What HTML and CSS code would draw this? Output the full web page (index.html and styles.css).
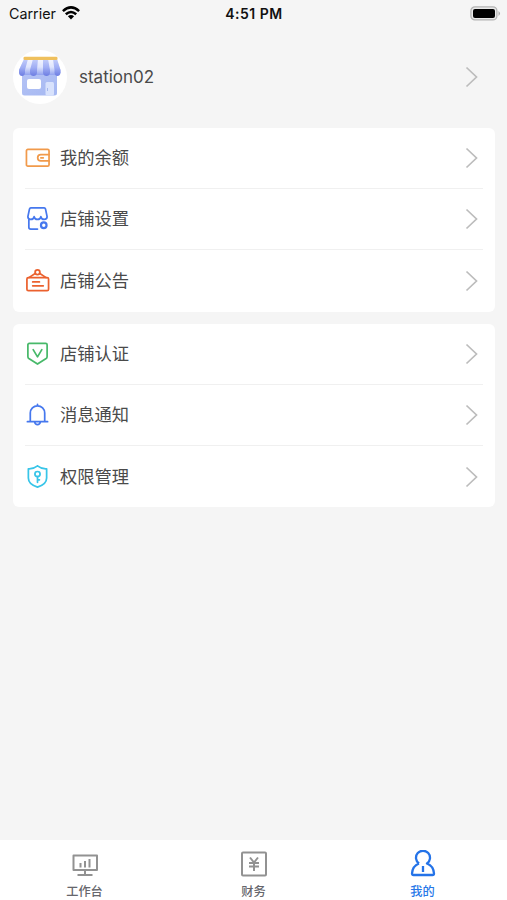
FILE: index.html
```html
<!DOCTYPE html>
<html lang="zh-CN">
<head>
<meta charset="utf-8">
<title>我的</title>
<link rel="stylesheet" href="styles.css">
</head>
<body>
<div class="screen">
  <header class="status">
    <div class="carrier"><span>Carrier</span>
      <svg width="18" height="14" viewBox="0 0 18 14"><g fill="none" stroke="#000" stroke-width="2.5"><path d="M.9 5.1Q9-2.3 17.1 5.1"/><path d="M3.800 8.300Q9 3.700 14.200 8.300"/></g><path d="M5.900 10.300Q9 7.900 12.100 10.300L9 13.600Z"/></svg>
    </div>
    <div class="clock">4:51 PM</div>
    <svg class="battery" width="31" height="15" viewBox="0 0 31 15"><rect x=".9" y=".9" width="26" height="13" rx="4" fill="#e9e9e9" stroke="#b3b3b3" stroke-width="1.3"/><rect x="3" y="3" width="22" height="9" rx="2"/><path d="M28.500 5q3 2.500 0 5z" fill="#aaa"/></svg>
  </header>
  <section class="profile">
    <svg class="avatar" width="54" height="54" viewBox="0 0 54 54">
      <defs>
        <linearGradient id="wall" x2="1" y2="1"><stop stop-color="#b5c3f5"/><stop offset="1" stop-color="#a5b8f2"/></linearGradient>
        <linearGradient id="dark" x2="0" y2="1"><stop stop-color="#c3cdfa"/><stop offset=".5" stop-color="#a0aef4"/><stop offset="1" stop-color="#6c7de2"/></linearGradient>
        <linearGradient id="light" x2="0" y2="1"><stop stop-color="#f3f5ff"/><stop offset=".5" stop-color="#dfe5fd"/><stop offset="1" stop-color="#93a3ef"/></linearGradient>
      </defs>
      <circle cx="27" cy="27" r="27" fill="#fff"/>
      <path d="M9 22h35v21q0 2.500-2.500 2.500h-30Q9 45.500 9 43z" fill="url(#wall)"/>
      <path d="M11 9h33l3.500 11v2.500q-1 2.500-3.500 2.500H10q-3 0-4-2.500V20z" fill="url(#light)"/>
      <g fill="url(#dark)"><path d="M11 9h4l-3 11v3q-.500 3-3 3t-3-3v-3z"/><path d="M20 9h5l-1 11v3q-.500 3-3.500 3T17 23v-3z"/><path d="M30 9h5l2 11v3q-.500 3-3.500 3T30 23z"/><path d="M40 9h4l3.500 11v3q-.500 3-3 3t-3-3v-3z"/></g>
      <rect x="10.500" y="6.700" width="34" height="3.300" rx="1.300" fill="#efc05d"/>
      <rect x="14" y="29" width="14" height="10" rx="2" fill="#fff"/>
      <rect x="32.500" y="32" width="8.500" height="13.500" rx="1.500" fill="#d8e2fc"/><path d="M34.500 38v3" stroke="#a5b7ef"/>
    </svg>
    <span class="name">station02</span>
    <svg class="arrow" width="13" height="22" viewBox="0 0 13 22"><path d="M1.500 1.500 11.500 11l-10 9.500"/></svg>
  </section>
  <main>
    <section class="card">
      <div class="row"><svg class="icon orange" viewBox="0 0 26 26"><rect x="1.500" y="4.500" width="23.500" height="17.500" rx="1.500"/><path d="M25 10h-8.500a3.300 3.300 0 0 0 0 6.600H25M16.500 13.300h2.500"/></svg><span>我的余额</span><svg class="arrow" width="13" height="22" viewBox="0 0 13 22"><path d="M1.500 1.500 11.500 11l-10 9.500"/></svg></div>
      <div class="row"><svg class="icon blue" viewBox="0 0 26 26"><path d="M6 2h14q1 0 1.300 1L23 11q0 3-3 3t-3.500-3q-.500 3-3.500 3t-3.500-3Q9 14 6 14t-3-3L4.700 3Q5 2 6 2M4 14v8q0 2 2 2h7"/><circle cx="19.500" cy="20" r="2.900" stroke-width="2.300"/></svg><span>店铺设置</span><svg class="arrow" width="13" height="22" viewBox="0 0 13 22"><path d="M1.500 1.500 11.500 11l-10 9.500"/></svg></div>
      <div class="row"><svg class="icon red" viewBox="0 0 26 26"><rect x="2" y="10" width="22.500" height="13.500" rx="1.500"/><path d="m4 10 7-4.500M22 10l-7-4.500M8 14.500h7M8 18.500h11"/><circle cx="13" cy="4.500" r="2.500"/></svg><span>店铺公告</span><svg class="arrow" width="13" height="22" viewBox="0 0 13 22"><path d="M1.500 1.500 11.500 11l-10 9.500"/></svg></div>
    </section>
    <section class="card">
      <div class="row"><svg class="icon green" viewBox="0 0 26 26"><path d="M4.500 2.500h17q1.500 0 1.500 1.500v12q0 1.500-1 2.200L13 24l-9-5.800Q3 17.500 3 16V4q0-1.500 1.500-1.500M8.500 9l4.500 7.500L17.500 9"/></svg><span>店铺认证</span><svg class="arrow" width="13" height="22" viewBox="0 0 13 22"><path d="M1.500 1.500 11.500 11l-10 9.500"/></svg></div>
      <div class="row"><svg class="icon blue" viewBox="0 0 26 26"><path d="M5.500 20.500v-9a7.500 7.500 0 0 1 15 0v9M2.500 20.500h21M13 2.500V4M10 21q.500 2.500 3 2.500t3-2.500"/></svg><span>消息通知</span><svg class="arrow" width="13" height="22" viewBox="0 0 13 22"><path d="M1.500 1.500 11.500 11l-10 9.500"/></svg></div>
      <div class="row"><svg class="icon cyan" viewBox="0 0 26 26"><path d="M13 2q4 3.300 9.500 3v9.500q0 6.500-9.500 9.500-9.500-3-9.500-9.500V5Q9 5.300 13 2"/><circle cx="13" cy="10.500" r="2.700"/><path d="M13 13.200V19M13 16.500h2"/></svg><span>权限管理</span><svg class="arrow" width="13" height="22" viewBox="0 0 13 22"><path d="M1.500 1.500 11.500 11l-10 9.500"/></svg></div>
    </section>
  </main>
  <nav class="tabs">
    <div class="tab"><svg width="28" height="28" viewBox="0 0 28 28"><path d="M2.500 5.500h23.500V20H2.500zM14 20v4.500M6.500 25h15M9.500 13v4.500M14 11v6.500M18.500 9v8.500"/></svg><span>工作台</span></div>
    <div class="tab"><svg width="28" height="28" viewBox="0 0 28 28"><rect x="2" y="2.500" width="24" height="23" rx="1"/><path d="m10 7.500 4 5 4-5M9 13h10M9 16.500h10M14 12.500V21"/></svg><span>财务</span></div>
    <div class="tab active"><svg width="28" height="28" viewBox="0 0 28 28"><path d="M10 13.500a7 7 0 1 1 8 0q6.500 2.500 7 10 0 1.500-1.500 1.500h-19Q3 25 3 23.500q.500-7.500 7-10M14 16v6"/></svg><span>我的</span></div>
  </nav>
</div>
</body>
</html>
```
FILE: styles.css
```css
* { box-sizing: border-box; }
body { margin: 0; background: #f5f5f5; color: #4a4a4a; font-family: Inter, "Noto Sans CJK SC", sans-serif; }
.screen { height: 900px; display: flex; flex-direction: column; }
svg { display: block; flex: none; }
.status { height: 28px; display: grid; grid-template-columns: 1fr auto 1fr; align-items: center; padding: 0 6px 2px 9px; color: #111; font-size: 14.3px; }
.carrier { display: flex; align-items: center; gap: 6px; }
.clock { font-size: 14px; font-weight: 600; letter-spacing: 0.5px; margin-right: 2px; }
.battery { justify-self: end; }
.profile { height: 99px; display: flex; align-items: center; padding: 0 29px 1px 13px; }
.name { margin-left: 12px; font-size: 17px; }
.arrow { margin-left: auto; fill: none; stroke: #bcbcbc; stroke-width: 1.7; }
main { flex: 1; display: flex; flex-direction: column; gap: 12px; padding: 1px 12px 0 13px; }
.card { background: #fff; border-radius: 6px; padding: 0 12px; height: 184px; }
.card + .card { height: 183px; }
.row { height: 61px; display: flex; align-items: center; padding: 0 5px 1px 0; font-size: 17.3px; border-bottom: 1px solid #f0f0f0; }
.row:last-child { border-bottom: 0; padding-bottom: 0; }
.row > span { margin-top: -2px; }
.icon { width: 25px; height: 25px; margin-right: 10px; fill: none; stroke: currentColor; stroke-width: 1.8; stroke-linejoin: round; stroke-linecap: round; }
.orange { color: #f19a4b; }
.blue { color: #4678ee; }
.red { color: #eb612e; }
.green { color: #48b96a; }
.cyan { color: #38c5e8; }
.tabs { height: 60px; background: #fff; display: grid; grid-template-columns: repeat(3, 1fr); }
.tab { display: flex; flex-direction: column; align-items: center; padding-top: 10px; font-size: 12.2px; font-weight: 500; line-height: 18px; color: #66666c; gap: 5px; }
.tab svg { fill: none; stroke: #929292; stroke-width: 2; stroke-linejoin: round; }
.tab.active { color: #2878e8; }
.tab.active svg { stroke: #2473e8; stroke-width: 2.3; }
```
